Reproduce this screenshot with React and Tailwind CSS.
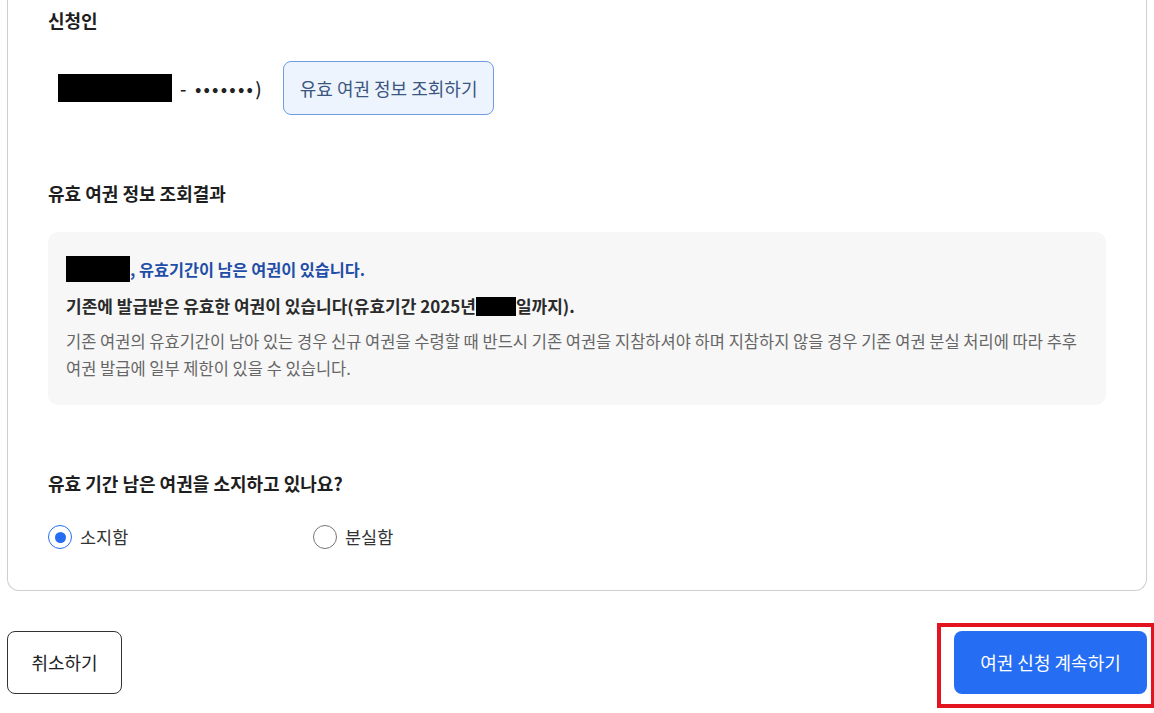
export default function App() {
  return (
    <div className="min-h-[713px] bg-white font-['Noto_Sans_CJK_KR',sans-serif] text-[#1e1e1e]">
      <div className="mx-[7px] w-[1140px]">
        {/* CARD */}
        <div className="border-x border-b border-[#cfcfcf] rounded-b-[12px] px-[40px] pt-[8px] pb-[41px]">
          <h2 className="text-[18px] leading-[24px] font-bold">신청인</h2>

          <div className="mt-[29px] flex items-center h-[54px]">
            <span className="ml-[10px] w-[114px] h-[28px] shrink-0 bg-black" />
            <span className="ml-[8px] text-[18px] leading-[24px] font-medium tracking-[2.2px] text-[#222]">- •••••••)</span>
            <button className="ml-[19px] h-[54px] px-[16px] rounded-[8px] border border-[#6f9cdc] bg-[#eef4fd] text-[18px] text-[#3b5680]">
              유효 여권 정보 조회하기
            </button>
          </div>

          <h2 className="mt-[66px] text-[18px] leading-[24px] font-bold">유효 여권 정보 조회결과</h2>

          {/* RESULT BOX */}
          <div className="mt-[27px] rounded-[10px] bg-[#f7f7f7] px-[18px] pt-[24px] pb-[23px]">
            <div className="flex items-center h-[26px]">
              <span className="w-[64px] h-[26px] shrink-0 bg-black" />
              <span className="text-[16.3px] leading-[24px] font-bold text-[#1f4ea8]">, 유효기간이 남은 여권이 있습니다.</span>
            </div>
            <p className="mt-[12px] flex items-center text-[17px] leading-[24px] font-bold text-[#2a2a2a]">
              기존에 발급받은 유효한 여권이 있습니다(유효기간 2025년
              <span className="inline-block shrink-0 w-[40px] h-[19px] bg-black" />
              일까지).
            </p>
            <p className="mt-[10px] text-[16.5px] leading-[27px] text-[#666]">
              기존 여권의 유효기간이 남아 있는 경우 신규 여권을 수령할 때 반드시 기존 여권을 지참하셔야 하며 지참하지 않을 경우 기존 여권 분실 처리에 따라 추후
              <br />
              여권 발급에 일부 제한이 있을 수 있습니다.
            </p>
          </div>

          <h2 className="mt-[66px] text-[18px] leading-[24px] font-bold">유효 기간 남은 여권을 소지하고 있나요?</h2>

          <div className="mt-[30px] flex items-center h-[24px]">
            <label className="w-[265px] flex items-center gap-[8px]">
              <span className="w-[24px] h-[24px] rounded-full border-[1.5px] border-[#256ef4] flex items-center justify-center">
                <span className="w-[11px] h-[11px] rounded-full bg-[#256ef4]" />
              </span>
              <span className="text-[17.5px] leading-[24px] text-[#333]">소지함</span>
            </label>
            <label className="flex items-center gap-[8px]">
              <span className="w-[24px] h-[24px] rounded-full border-[1.5px] border-[#777]" />
              <span className="text-[17.5px] leading-[24px] text-[#333]">분실함</span>
            </label>
          </div>
        </div>

        {/* ACTIONS */}
        <div className="mt-[40px] flex justify-between">
          <button className="w-[115px] h-[63px] rounded-[8px] border border-[#333] bg-white text-[18px] text-[#222]">
            취소하기
          </button>
          <div className="relative">
            <button className="w-[193px] h-[63px] rounded-[8px] bg-[#256ef4] text-[18px] text-white">
              여권 신청 계속하기
            </button>
            <span className="absolute left-[-17px] top-[-8px] right-[-8px] bottom-[-14px] border-[4px] border-[#e3141f] pointer-events-none" />
          </div>
        </div>
      </div>
    </div>
  );
}
